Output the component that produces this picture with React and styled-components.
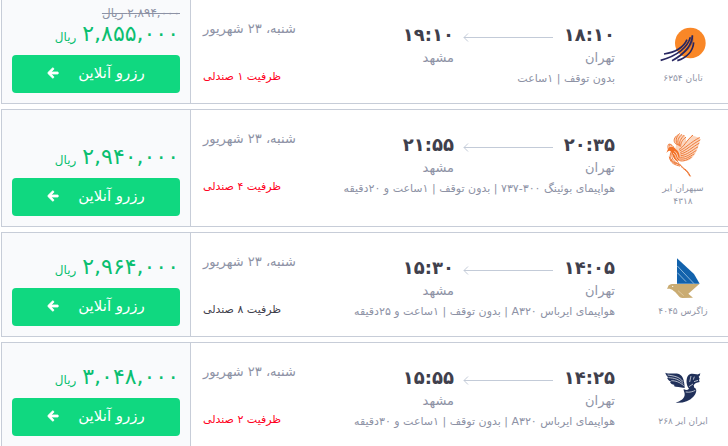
import styled, { createGlobalStyle } from "styled-components";
import { FaArrowLeft } from "react-icons/fa";

const GlobalStyle = createGlobalStyle`
  * {
    box-sizing: border-box;
  }
  body {
    margin: 0;
    background: #fff;
    color: #3f404c;
    font-family: "DejaVu Sans", sans-serif;
    overflow: hidden;
  }
`;

const List = styled.main`
  display: flex;
  flex-direction: column;
  gap: 5px;
  margin: -1px 0 0 1px;
`;

const Card = styled.article`
  display: flex;
  border: 1px solid #c7cdd8;
  border-right: none;
  background: #fff;
`;

const Airline = styled.div`
  display: flex;
  flex-direction: column;
  align-items: center;
  flex: 0 0 90px;
  padding: 20px 17px 18px;
`;

const Logo = styled.svg`
  display: block;
  width: 50px;
  height: 50px;
`;

const AirlineName = styled.span`
  width: 56px;
  margin-top: 2px;
  font-size: 9px;
  line-height: 13px;
  text-align: center;
  color: #9094a6;
`;

const Flight = styled.div`
  flex: 1;
  padding: 22px 23px 0 0;
`;

const Route = styled.div`
  display: flex;
`;

const Stop = styled.div`
  min-width: 53px;
`;

const Time = styled.time`
  display: block;
  font-size: 18px;
  font-weight: 700;
  line-height: 26px;
`;

const City = styled.div`
  font-size: 13px;
  line-height: 20px;
  color: #8d92a5;
`;

const RouteArrow = styled.svg`
  display: block;
  width: 90px;
  height: 10px;
  margin: 11px 9px 0;
  fill: none;
  stroke: #c3cbd8;
`;

const Details = styled.p`
  margin: 0;
  font-size: 11px;
  line-height: 22px;
  white-space: nowrap;
  color: #8d92a5;
`;

const Schedule = styled.div`
  padding: 17px 0 0 12px;
  text-align: left;
  white-space: nowrap;
`;

const DateText = styled.div`
  font-size: 13px;
  line-height: 24px;
  color: #8d92a5;
`;

const Capacity = styled.div`
  margin-top: 24px;
  font-size: 11px;
  line-height: 24px;
  color: ${({ $low }) => ($low ? "#ff0022" : "#3f404c")};
`;

const Purchase = styled.div`
  display: flex;
  flex-direction: column;
  justify-content: flex-end;
  flex: 0 0 189px;
  padding: 0 10px 10px;
  border-right: 1px solid #c7cdd8;
  background: #f9fafc;
`;

const OldPrice = styled.s`
  font-size: 12px;
  line-height: 14px;
  color: #8d92a5;
`;

const Price = styled.div`
  display: flex;
  align-items: baseline;
  gap: 6px;
  height: 28px;
  margin-bottom: 7px;
  padding-right: 1px;
  font-size: 22px;
  line-height: 28px;
  white-space: nowrap;
  color: #0bbf70;
`;

const Currency = styled.span`
  font-size: 12px;
`;

const BookButton = styled.button`
  display: flex;
  align-items: center;
  justify-content: center;
  gap: 19px;
  height: 38px;
  padding: 0 0 2px;
  border: none;
  border-radius: 4px;
  background: #10d880;
  color: #fff;
  font-family: inherit;
  font-size: 15px;
  cursor: pointer;
`;

const ButtonArrow = styled(FaArrowLeft)`
  width: 12px;
  height: 12px;
  stroke: currentColor;
  stroke-width: 40px;
  overflow: visible;
`;

function TabanLogo() {
  return (
    <Logo viewBox="24 15 150 150" aria-hidden="true">
      <circle cx="121" cy="84" r="46" fill="#f98727" />
      <g fill="none" stroke="#282761" strokeWidth="5">
        <path d="M127 61C128 86 108 115 66 137" />
        <path d="M131 82C129 108 110 128 82 137" />
        <path d="M121 67C113 97 82 123 32 136" />
        <path d="M111 74C100 99 76 112 42 117" />
      </g>
      <path
        d="M122 65C120 89 112 105 92 119C111 112 124 96 130 78V62Z"
        fill="#282761"
        fillOpacity="0.35"
      />
    </Logo>
  );
}

function SepehranLogo() {
  return (
    <Logo viewBox="54 30 150 150" aria-hidden="true">
      <path
        d="M109 73C98 65 103 54 113 42L132 45C140 53 137 65 141 65L155 46L180 54C179 76 166 116 141 123L118 122L103 98Z"
        fill="#fbd6bf"
      />
      <g fill="none" stroke="#ef7a38" strokeWidth="3" strokeLinecap="round">
        <path d="M113 75C105 65 108 51 118 41M116 76C110 64 115 52 125 44M119 78C116 67 122 56 132 46M122 79C121 69 127 60 137 52M109 73C99 67 101 55 109 48" />
        <path d="M118 88C132 81 140 60 158 46M120 92C136 85 150 68 178 53M122 97C139 91 154 74 180 60M122 102C141 98 157 81 177 70M123 107C142 105 155 91 173 81M122 112C140 113 152 101 168 92M121 117C136 120 148 110 162 102M119 122C131 126 142 119 154 112" />
        <path d="M94 77C86 67 83 73 84 85M100 80C91 69 86 72 89 79M95 92C85 112 92 123 104 130M99 88C91 108 96 120 110 129M105 90C98 108 103 118 115 127" />
        <path d="M94 117C101 134 118 130 124 139C129 149 139 147 149 168M106 129C126 131 122 140 134 147C142 151 145 158 151 168M88 111C92 132 105 134 119 138" />
      </g>
      <path
        d="M79 99L84 87C89 76 102 78 107 88C113 92 118 97 119 109C120 119 118 124 110 122C99 119 99 103 92 94C88 90 85 93 79 99Z"
        fill="#f37126"
      />
      <path
        d="M103 94C114 97 110 113 118 117M99 99C109 104 105 115 114 121"
        fill="none"
        stroke="#fff"
        strokeWidth="2"
      />
    </Logo>
  );
}

function ZagrosLogo() {
  return (
    <Logo viewBox="24 9 150 150" aria-hidden="true">
      <path d="M81 25L132 72L149 101H81Z" fill="#1262ac" />
      <path
        d="M82 48L132 101M82 68L108 95"
        fill="none"
        stroke="#c6e0f2"
        strokeWidth="2"
      />
      <path
        d="M51 117L56 106C64 99 76 103 83 102H148L115 131L129 143L98 144C84 143 84 131 71 123C63 116 56 116 51 117Z"
        fill="#caac72"
      />
      <path
        d="M84 122L101 137"
        fill="none"
        stroke="#ead8b6"
        strokeWidth="2"
      />
      <circle cx="68" cy="109" r="2" fill="#fff" />
    </Logo>
  );
}

function IranAirLogo() {
  return (
    <Logo viewBox="24 9 150 150" aria-hidden="true">
      <g fill="#20305a">
        <path d="M46 38C58 43 76 38 87 42C100 48 103 64 104 84C91 81 78 82 71 78L74 75C66 74 62 71 60 66L64 65C56 62 53 57 51 53L56 53C50 48 47 43 46 38Z" />
        <path d="M117 86C108 76 108 59 113 49C119 38 132 41 139 43C143 44 147 43 151 40L149 47L146 50L149 56L147 60L149 66C140 67 134 70 131 76L133 83C143 86 139 101 130 110C117 124 98 130 77 128C91 124 103 116 104 105C105 97 100 93 101 87C107 91 113 91 117 86Z" />
      </g>
      <g fill="none" stroke="#fff" strokeWidth="2">
        <path d="M53 45C70 48 88 49 99 65M56 53C72 54 86 57 100 71M64 62C76 62 89 66 101 77" />
        <path d="M123 48L119 66M133 50L130 59M132 65L144 61M117 80L129 72" />
        <path d="M107 96C120 98 128 95 136 91" />
      </g>
    </Logo>
  );
}

const flights = [
  {
    logo: TabanLogo,
    airline: "تابان ۶۲۵۴",
    departure: "۱۸:۱۰",
    arrival: "۱۹:۱۰",
    details: "بدون توقف | ۱ساعت",
    seats: "۱",
    low: true,
    oldPrice: "۲,۸۹۴,۰۰۰",
    price: "۲,۸۵۵,۰۰۰",
  },
  {
    logo: SepehranLogo,
    airline: "سپهران ایر ۴۳۱۸",
    departure: "۲۰:۳۵",
    arrival: "۲۱:۵۵",
    details: "هواپیمای بوئینگ ۳۰۰-۷۳۷ | بدون توقف | ۱ساعت و ۲۰دقیقه",
    seats: "۴",
    low: true,
    price: "۲,۹۴۰,۰۰۰",
  },
  {
    logo: ZagrosLogo,
    airline: "زاگرس ۴۰۴۵",
    departure: "۱۴:۰۵",
    arrival: "۱۵:۳۰",
    details: "هواپیمای ایرباس A۳۲۰ | بدون توقف | ۱ساعت و ۲۵دقیقه",
    seats: "۸",
    low: false,
    price: "۲,۹۶۴,۰۰۰",
  },
  {
    logo: IranAirLogo,
    airline: "ایران ایر ۲۶۸",
    departure: "۱۴:۲۵",
    arrival: "۱۵:۵۵",
    details: "هواپیمای ایرباس A۳۲۰ | بدون توقف | ۱ساعت و ۳۰دقیقه",
    seats: "۲",
    low: true,
    price: "۳,۰۴۸,۰۰۰",
  },
];

function FlightCard({ flight }) {
  const AirlineLogo = flight.logo;

  return (
    <Card>
      <Airline>
        <AirlineLogo />
        <AirlineName>{flight.airline}</AirlineName>
      </Airline>
      <Flight>
        <Route>
          <Stop>
            <Time>{flight.departure}</Time>
            <City>تهران</City>
          </Stop>
          <RouteArrow viewBox="0 0 90 10" aria-hidden="true">
            <path d="M1 4.5H90M5 0.5L1 4.5L5 8.5" />
          </RouteArrow>
          <Stop>
            <Time>{flight.arrival}</Time>
            <City>مشهد</City>
          </Stop>
        </Route>
        <Details>{flight.details}</Details>
      </Flight>
      <Schedule>
        <DateText>شنبه، ۲۳ شهریور</DateText>
        <Capacity $low={flight.low}>ظرفیت {flight.seats} صندلی</Capacity>
      </Schedule>
      <Purchase>
        {flight.oldPrice && <OldPrice>{flight.oldPrice} ریال</OldPrice>}
        <Price>
          {flight.price} <Currency>ریال</Currency>
        </Price>
        <BookButton type="button">
          رزرو آنلاین
          <ButtonArrow aria-hidden="true" />
        </BookButton>
      </Purchase>
    </Card>
  );
}

function App() {
  return (
    <>
      <GlobalStyle />
      <List dir="rtl" lang="fa">
        {flights.map((flight) => (
          <FlightCard key={flight.airline} flight={flight} />
        ))}
      </List>
    </>
  );
}

export default App;
